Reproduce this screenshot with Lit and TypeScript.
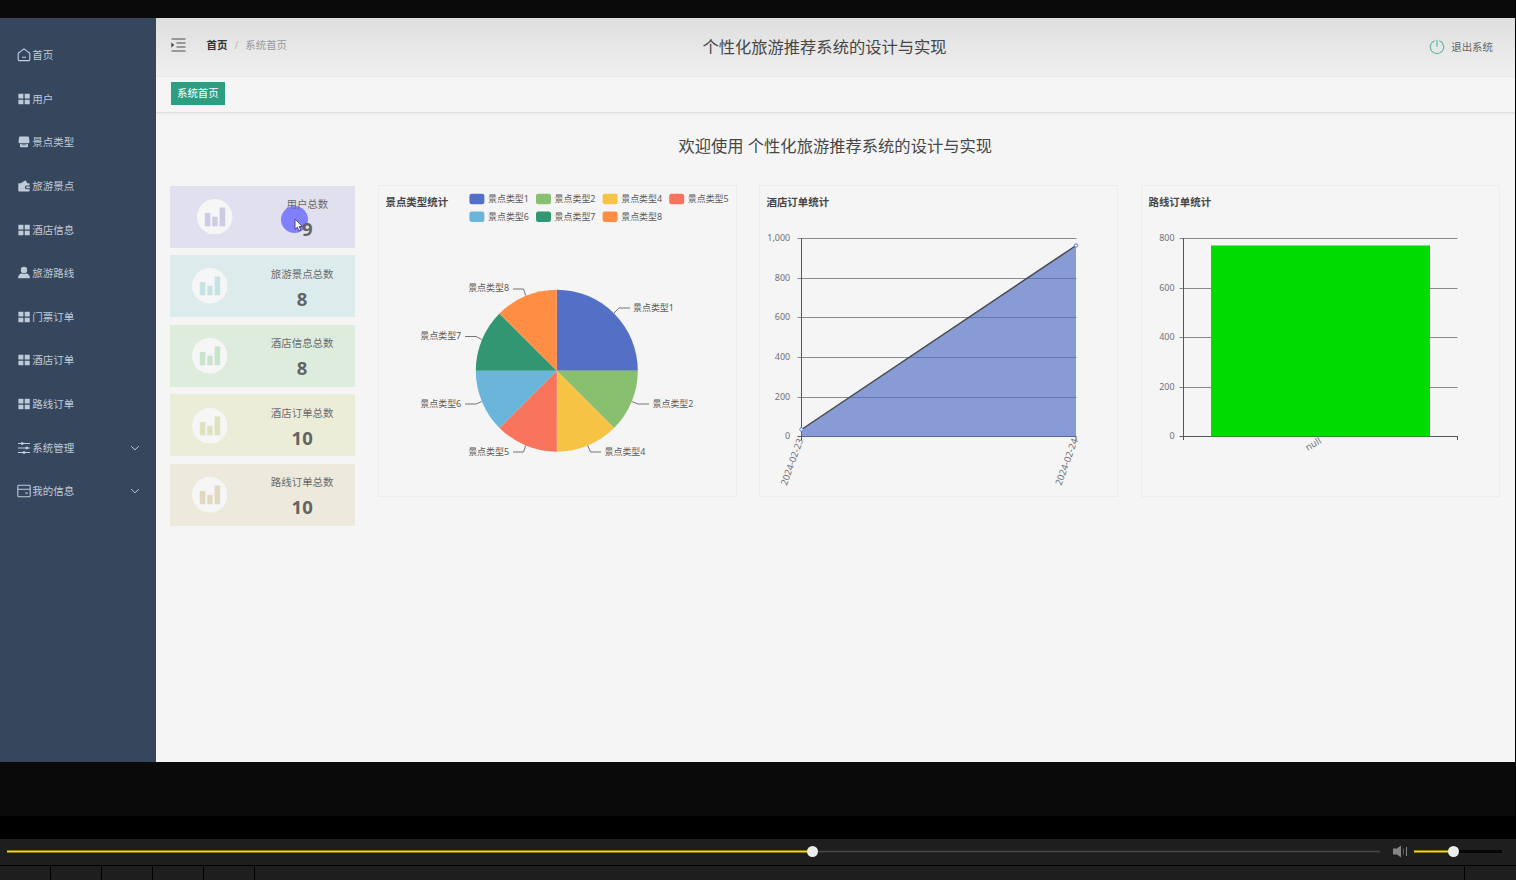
import { LitElement, html, svg, css } from 'lit';
import { customElement, property } from 'lit/decorators.js';

const FONT = css`'Noto Sans', 'Noto Sans CJK SC', sans-serif`;

interface MenuEntry {
  label: string;
  icon: string;
  expandable?: boolean;
}

const MENU: MenuEntry[] = [
  { label: '首页', icon: 'home' },
  { label: '用户', icon: 'grid' },
  { label: '景点类型', icon: 'shop' },
  { label: '旅游景点', icon: 'wallet' },
  { label: '酒店信息', icon: 'grid' },
  { label: '旅游路线', icon: 'user' },
  { label: '门票订单', icon: 'grid' },
  { label: '酒店订单', icon: 'grid' },
  { label: '路线订单', icon: 'grid' },
  { label: '系统管理', icon: 'sliders', expandable: true },
  { label: '我的信息', icon: 'card', expandable: true },
];

const STATS = [
  { label: '用户总数', value: 9, bg: '#e0e0ee', bar: '#cbcbe5', pointer: true },
  { label: '旅游景点总数', value: 8, bg: '#dcecec', bar: '#c6e2e2' },
  { label: '酒店信息总数', value: 8, bg: '#deecde', bar: '#c8e4cc' },
  { label: '酒店订单总数', value: 10, bg: '#ecedd9', bar: '#dfe1bf' },
  { label: '路线订单总数', value: 10, bg: '#ede9dc', bar: '#e0d8bf' },
];

const ICONS: Record<string, unknown> = {
  home: svg`<path d="M1.2 5.2 7 .9l5.8 4.3v6.4q0 1-1 1H2.2q-1 0-1-1z M5 9.3h4" fill="none" stroke="currentColor" stroke-width="1.1" stroke-linejoin="round" />`,
  grid: svg`<path d="M1.4 1.8h5v4.6h-5z M7.7 1.8h5v4.6h-5z M1.4 7.7h5v4.6h-5z M7.7 7.7h5v4.6h-5z" fill="currentColor" />`,
  shop: svg`<path d="M2.8 1.5h8.400q.6 0 .7.6l.6 4.600q0 1.600-1.200 1.600H2.700Q1.500 8.300 1.500 6.700l.6-4.600q.1-.6.7-.6z M3 9h8v2.500q0 .8-.8.8H3.800q-.8 0-.8-.8z" fill="currentColor" /><path d="M4.500 9.800h5" stroke="#36465d" stroke-width=".7" />`,
  wallet: svg`<path d="M1.300 4.300h2.500l4.800-3 1.700 3h1.600q.7 0 .7.7v1.500H9.800a1.900 1.900 0 0 0 0 3.800h2.800v1.500q0 .7-.7.7H2q-.7 0-.7-.7z M9.900 7.500h2.900v1.700H9.900a.85.85 0 0 1 0-1.700z" fill="currentColor" />`,
  user: svg`<path d="M7 .8a3.200 3.200 0 1 1 0 6.400A3.200 3.200 0 0 1 7 .8z M4.600 7.200q2.400 1.500 4.800 0 3.400 1.200 3.600 5.100H1q.2-3.900 3.600-5.100z" fill="currentColor" />`,
  sliders: svg`<path d="M1 2.500h12M1 7h12M1 11.500h12" stroke="currentColor" stroke-width="1.100" /><path d="M4 1.300h2.400v2.400H4z M8.600 5.800H11v2.400H8.600z M5.800 10.300h2.400v2.400H5.800z" fill="currentColor" />`,
  card: svg`<path d="M1.700 1.300h10.600q.9 0 .9.900v9.600q0 .9-.9.900H1.700q-.9 0-.9-.9V2.200q0-.9.900-.9z M.8 5.200h12.400 M8 9h3" fill="none" stroke="currentColor" stroke-width="1.1" />`,
};

@customElement('side-menu')
export class SideMenu extends LitElement {
  static styles = css`
    :host {
      display: block;
      box-sizing: border-box;
      width: 155.5px;
      padding-top: 15.7px;
      background: #36465d;
      color: #bfcbd9;
      font: 10.5px ${FONT};
    }

    .item {
      display: flex;
      align-items: center;
      height: 43.65px;
      padding: 0 16px 0 17px;
    }

    .icon {
      width: 14px;
      height: 14px;
      flex: none;
    }

    .label {
      margin-left: 1.2px;
      line-height: 16px;
      flex: 1;
    }

    .arrow {
      width: 10px;
      height: 8px;
    }
  `;

  render() {
    return MENU.map(
      (m) => html`
        <div class="item">
          <svg class="icon" viewBox="0 0 14 14">${ICONS[m.icon]}</svg>
          <span class="label">${m.label}</span>
          ${m.expandable
            ? html`<svg class="arrow" viewBox="0 0 10 8">
                <path d="M1.200 2.200 5 5.800l3.800-3.600" fill="none" stroke="#bfcbd9" stroke-width="1" />
              </svg>`
            : ''}
        </div>
      `
    );
  }
}

@customElement('stat-card')
export class StatCard extends LitElement {
  @property({ type: String }) label = '';
  @property({ type: Number }) value = 0;
  @property({ type: String }) bg = '';
  @property({ type: String }) bar = '';
  @property({ type: Boolean }) pointer = false;

  static styles = css`
    :host {
      display: block;
      height: 62.2px;
      font: 10.45px ${FONT};
    }

    .card {
      position: relative;
      display: flex;
      justify-content: space-around;
      align-items: center;
      height: 100%;
    }

    .badge {
      width: 35.5px;
      height: 35.5px;
    }

    .text {
      position: relative;
      text-align: center;
      color: #6b6b6b;
      z-index: 1;
    }

    .label {
      line-height: 20px;
      margin-top: 5px;
    }

    .value {
      font-size: 18.5px;
      font-weight: 700;
      line-height: 30px;
      color: #636363;
    }

    .halo {
      position: absolute;
      left: 111px;
      top: 20px;
      width: 27px;
      height: 27px;
      border-radius: 50%;
      background: #8080ff;
    }

    .cursor {
      position: absolute;
      left: 124px;
      top: 32px;
      width: 9px;
      height: 14px;
      z-index: 2;
    }
  `;

  render() {
    return html`
      <div class="card" style="background: ${this.bg}">
        <svg class="badge" viewBox="0 0 35 35">
          <circle cx="17.5" cy="17.5" r="17.500" fill="#f6f6f6" />
          <path d="M7.700 13.800h5.500v13H7.700z M15.100 17.600h5.200v9.200h-5.200z M22.300 8.500h5.500v18.300h-5.500z" fill=${this.bar} />
        </svg>
        <div class="text">
          <div class="label">${this.label}</div>
          <div class="value">${this.value}</div>
        </div>
        ${this.pointer
          ? html`<div class="halo"></div>
              <svg class="cursor" viewBox="0 0 9 14">
                <path d="M1 1v10.300l2.300-2.100 1.500 3.600 1.900-.8L5.200 8.500h3.100z" fill="#fff" stroke="#3b3b70" stroke-width=".9" />
              </svg>`
          : ''}
      </div>
    `;
  }
}

const PIE = [
  { name: '景点类型1', parts: 2, color: '#5470c6' },
  { name: '景点类型2', parts: 1, color: '#88c070' },
  { name: '景点类型4', parts: 1, color: '#f6c344' },
  { name: '景点类型5', parts: 1, color: '#f8745c' },
  { name: '景点类型6', parts: 1, color: '#6bb5db' },
  { name: '景点类型7', parts: 1, color: '#319672' },
  { name: '景点类型8', parts: 1, color: '#ff8e45' },
];

// leader line points and label anchor for each slice
const LEADERS = [
  { line: '236,128 241,123 252,123', x: 255, y: 122.500 },
  { line: '253.700,216.500 260,219 271,219', x: 274.500, y: 219 },
  { line: '209.700,260.500 212.500,267 223,267', x: 226.500, y: 266.500 },
  { line: '147.700,260.500 145.500,267 135,267', x: 131, y: 266.500, end: true },
  { line: '103.700,216.500 98,219 87,219', x: 83.200, y: 219, end: true },
  { line: '103.700,154.500 98,151.500 87,151.500', x: 83.200, y: 151, end: true },
  { line: '147.700,110.500 145.500,104 135,104', x: 131, y: 103, end: true },
];

@customElement('chart-panel')
export class ChartPanel extends LitElement {
  @property({ type: String }) heading = '';
  @property({ type: String }) kind = 'pie';

  static styles = css`
    :host {
      display: block;
      box-sizing: border-box;
      height: 311.5px;
      border: 1px solid #ededed;
    }

    .chart {
      display: block;
      width: 359px;
      height: 311px;
      margin: -1px;
      overflow: visible;
      font: 8.95px ${FONT};
      fill: #5a5a5a;
    }

    .heading {
      font-size: 10.45px;
      font-weight: 700;
      fill: #464646;
    }

    .tick {
      fill: #6e7079;
    }

    .date {
      font-size: 9.4px;
    }

    .rule {
      stroke: #8a8a8a;
      stroke-width: 1;
    }

    .axis {
      stroke: #55555c;
      stroke-width: 1;
    }

    .leader {
      fill: none;
      stroke: #666;
      stroke-width: 0.9;
    }
  `;

  private _pie() {
    const cx = 178.8;
    const cy = 185.7;
    const r = 81;
    let turn = 0;
    const point = (n: number) => {
      const a = (n / 8) * Math.PI * 2;
      return `${cx + Math.sin(a) * r} ${cy - Math.cos(a) * r}`;
    };

    return svg`
      ${PIE.map((p, i) => {
        const x = 91.4 + (i % 4) * 66.6;
        const y = i < 4 ? 14 : 31.7;
        return svg`
          <rect x=${x} y=${y - 5.2} width="15" height="10.500" rx="2.300" fill=${p.color} />
          <text x=${x + 18.6} y=${y + 2.9}>${p.name}</text>`;
      })}
      ${PIE.map((p) => {
        const from = point(turn);
        turn += p.parts;
        return svg`<path d="M${cx} ${cy}L${from}A${r} ${r} 0 0 1 ${point(turn)}Z" fill=${p.color} />`;
      })}
      ${LEADERS.map(
        (l, i) => svg`
          <polyline class="leader" points=${l.line} />
          <text x=${l.x} y=${l.y + 3.2} text-anchor=${l.end ? 'end' : 'start'}>${PIE[i].name}</text>`
      )}
    `;
  }

  private _scale(values: string[], right: number, labelX: number) {
    const step = 198 / (values.length - 1);
    return values.map((v, i) => {
      const y = Math.round(53.2 + i * step) + 0.5;
      return svg`
        <line class=${i === values.length - 1 ? 'axis' : 'rule'} x1="38.500" x2=${right} y1=${y} y2=${y} />
        <text class="tick" x=${labelX} y=${y + 2.8} text-anchor="end">${v}</text>`;
    });
  }

  private _area() {
    return svg`
      ${this._scale(['1,000', '800', '600', '400', '200', '0'], 317.5, 31.2)}
      <line class="axis" x1="42.500" x2="42.500" y1="53" y2="255" />
      <path d="M42.500 244.500 317 60.500V252H42.500z" fill="#5470c6" fill-opacity=".68" />
      <path d="M42.500 244.500 317 60.500" stroke="#46484d" stroke-width="1.500" />
      <line class="axis" x1="317" x2="317" y1="252" y2="255" />
      <circle cx="42.500" cy="244.500" r="1.700" fill="#fff" stroke="#5470c6" />
      <circle cx="317" cy="60.500" r="1.700" fill="#fff" stroke="#5470c6" />
      <text class="tick date" text-anchor="end" transform="translate(44.400 255) rotate(-70)">2024-02-23</text>
      <text class="tick date" text-anchor="end" transform="translate(319 255) rotate(-70)">2024-02-24</text>
    `;
  }

  private _bar() {
    return svg`
      ${this._scale(['800', '600', '400', '200', '0'], 316.5, 33.5)}
      <line class="axis" x1="42.500" x2="42.500" y1="53" y2="255" />
      <line class="axis" x1="316.500" x2="316.500" y1="251" y2="255" />
      <rect x="70" y="60.500" width="219" height="191" fill="#00dc00" />
      <text class="tick date" text-anchor="end" transform="translate(181 257.700) rotate(-30)">null</text>
    `;
  }

  render() {
    const body = this.kind === 'pie' ? this._pie() : this.kind === 'area' ? this._area() : this._bar();
    return html`
      <svg class="chart" viewBox="0 0 359 311">
        <text class="heading" x="7.500" y="21">${this.heading}</text>
        ${body}
      </svg>
    `;
  }
}

@customElement('player-bar')
export class PlayerBar extends LitElement {
  static styles = css`
    :host {
      display: block;
    }

    .controls {
      box-sizing: border-box;
      display: flex;
      align-items: center;
      height: 26px;
      padding: 0 14px 1px 7px;
      background: #1e1e1e;
    }

    .track {
      position: relative;
      height: 3px;
      background: linear-gradient(#282828 33%, #484848 33%, #484848 67%, #282828 67%);
    }

    .seek {
      width: 1373px;
    }

    .volume {
      width: 88px;
      background: #050505;
    }

    .fill {
      height: 3px;
      background: linear-gradient(#8d7d08 33%, #f7dc13 33%, #f7dc13 67%, #8d7d08 67%);
    }

    .knob {
      position: absolute;
      top: -4px;
      width: 11px;
      height: 11px;
      margin-left: -5.5px;
      border-radius: 50%;
      background: #ececec;
    }

    .speaker {
      width: 15px;
      height: 13px;
      margin: 0 6px 0 13px;
    }

    .cells {
      display: flex;
      gap: 1px;
      height: 14px;
      margin-top: 1px;
    }

    .cell {
      width: 50px;
      background: #1e1e1e;
    }

    .cell.wide {
      flex: 1;
    }

    .cell.last {
      width: 51px;
    }
  `;

  private _track(kind: string, width: number, value: number) {
    return html`
      <div class="track ${kind}">
        <div class="fill" style="width: ${width * value}px"></div>
        <div class="knob" style="left: ${width * value}px"></div>
      </div>
    `;
  }

  render() {
    return html`
      <div class="controls">
        ${this._track('seek', 1373, 0.5867)}
        <svg class="speaker" viewBox="0 0 15 13">
          <path d="M0 3.500h4L8 .5v12l-4-3H0z" fill="#858585" />
          <path d="M10.500 3.500v6" stroke="#5c5c5c" />
          <path d="M13.500 2v9" stroke="#858585" />
        </svg>
        ${this._track('volume', 88, 0.447)}
      </div>
      <div class="cells">
        ${[0, 1, 2, 3, 4].map(() => html`<div class="cell"></div>`)}
        <div class="cell wide"></div>
        <div class="cell last"></div>
      </div>
    `;
  }
}

@customElement('app-root')
export class AppRoot extends LitElement {
  static styles = css`
    :host {
      display: flex;
      flex-direction: column;
      box-sizing: border-box;
      width: 1516px;
      height: 880px;
      overflow: hidden;
      background: #000;
      color: #464646;
      font: 10.45px ${FONT};
    }

    .frame {
      box-sizing: border-box;
      width: 1515px;
      height: 816px;
      padding: 17.5px 0 53.5px;
      background: #0a0a0a;
    }

    .screen {
      display: flex;
      height: 744.8px;
      background: #f5f5f5;
    }

    .main {
      flex: 1;
      min-width: 0;
    }

    .header {
      box-sizing: border-box;
      display: grid;
      grid-template-columns: 1fr auto 1fr;
      align-items: center;
      height: 59.5px;
      padding: 0 22px 0 15.5px;
      background: linear-gradient(#dedede, #f0f0f0);
      border-bottom: 1px solid #eaeaea;
    }

    .crumbs {
      display: flex;
      align-items: center;
      line-height: 16px;
      margin-top: -4px;
    }

    .fold {
      width: 15px;
      height: 14px;
      margin-right: 20.5px;
    }

    .here {
      font-weight: 700;
      color: #303133;
    }

    .slash {
      margin: 0 7px;
      color: #b4b8c0;
    }

    .current {
      color: #97999f;
    }

    .title {
      font-size: 16.3px;
      line-height: 24px;
      margin-left: -15px;
    }

    .logout {
      display: flex;
      justify-content: flex-end;
      align-items: center;
      gap: 6.5px;
      color: #666;
    }

    .power {
      width: 16px;
      height: 16px;
    }

    .tabs {
      box-sizing: border-box;
      display: flex;
      align-items: flex-start;
      height: 35.5px;
      padding: 5px 15.5px;
      border-bottom: 1px solid #dedede;
      box-shadow: 0 1px 2px #0000000d;
    }

    .tab {
      padding: 0 6px;
      line-height: 22.5px;
      color: #fff;
      background: #2c9f82;
    }

    .welcome {
      margin: 21px 0 26.5px;
      text-align: center;
      font-size: 16.3px;
      line-height: 25px;
    }

    .board {
      display: grid;
      grid-template-columns: 185px 359px 359px 359px;
      column-gap: 22.5px;
      align-items: start;
      padding-left: 14.7px;
    }

    .stats {
      display: grid;
      gap: 7.4px;
      margin-top: 0.5px;
    }

    .player {
      margin-top: 23px;
    }
  `;

  render() {
    return html`
      <div class="frame">
        <div class="screen">
          <side-menu></side-menu>
          <div class="main">
            <div class="header">
              <div class="crumbs">
                <svg class="fold" viewBox="0 0 15 14">
                  <path d="M.5 1h14M5.500 5h9M5.500 9h9M.5 13h14" stroke="#4a4a4a" stroke-width="1.200" />
                  <path d="M.3 4.400 3.400 7 .3 9.600z" fill="#4a4a4a" />
                </svg>
                <span class="here">首页</span>
                <span class="slash">/</span>
                <span class="current">系统首页</span>
              </div>
              <div class="title">个性化旅游推荐系统的设计与实现</div>
              <div class="logout">
                <svg class="power" viewBox="0 0 16 16">
                  <path d="M5.700 1.700a6.700 6.700 0 1 0 4.600 0M8 .8v7" fill="none" stroke="#5fb8a2" stroke-width="1.200" />
                </svg>
                <span>退出系统</span>
              </div>
            </div>
            <div class="tabs"><div class="tab">系统首页</div></div>
            <div class="welcome">欢迎使用 个性化旅游推荐系统的设计与实现</div>
            <div class="board">
              <div class="stats">
                ${STATS.map(
                  (s) => html`
                    <stat-card
                      .label=${s.label}
                      .value=${s.value}
                      .bg=${s.bg}
                      .bar=${s.bar}
                      .pointer=${!!s.pointer}
                    ></stat-card>
                  `
                )}
              </div>
              <chart-panel heading="景点类型统计" kind="pie"></chart-panel>
              <chart-panel heading="酒店订单统计" kind="area"></chart-panel>
              <chart-panel heading="路线订单统计" kind="bar"></chart-panel>
            </div>
          </div>
        </div>
      </div>
      <player-bar class="player"></player-bar>
    `;
  }
}

declare global {
  interface HTMLElementTagNameMap {
    'side-menu': SideMenu;
    'stat-card': StatCard;
    'chart-panel': ChartPanel;
    'player-bar': PlayerBar;
    'app-root': AppRoot;
  }
}
